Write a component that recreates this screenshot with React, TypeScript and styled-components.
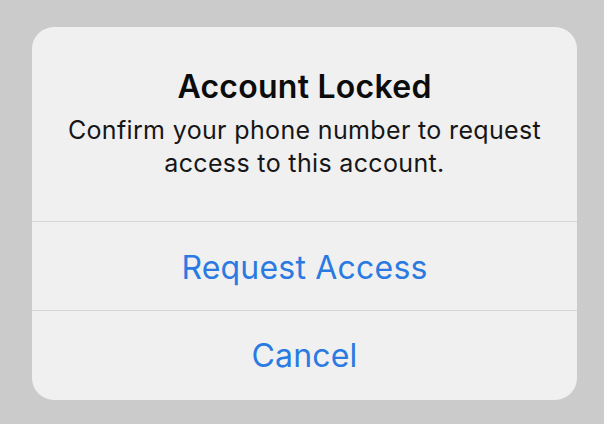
import React from "react";
import styled, { createGlobalStyle } from "styled-components";

const Global = createGlobalStyle`
  html, body {
    margin: 0;
    padding: 0;
    background: #cbcbcb;
  }
  body {
    width: 604px;
    height: 424px;
    overflow: hidden;
    font-family: Inter, "Noto Sans", "Liberation Sans", sans-serif;
  }
`;

const Stage = styled.div`
  width: 604px;
  height: 424px;
  box-sizing: border-box;
  padding: 27px 27px 24px 32px;
  display: flex;
  align-items: flex-start;
`;

const Dialog = styled.div`
  width: 545px;
  height: 373px;
  background: #f0f0f0;
  border-radius: 22px;
  display: flex;
  flex-direction: column;
  overflow: hidden;
`;

const Header = styled.div`
  box-sizing: border-box;
  height: 195px;
  padding: 41px 10px 0;
  display: flex;
  flex-direction: column;
  align-items: center;
  text-align: center;
  border-bottom: 1px solid #d6d6d6;
`;

const Title = styled.h1`
  margin: 0;
  font-size: 32px;
  line-height: 38px;
  letter-spacing: 0.25px;
  font-weight: 600;
  color: #0c0c0c;
`;

const Message = styled.p`
  margin: 8px 0 0;
  font-size: 25px;
  line-height: 33px;
  letter-spacing: 0.35px;
  font-weight: 400;
  color: #161616;
  white-space: nowrap;
`;

const Action = styled.button<{ $last?: boolean }>`
  box-sizing: border-box;
  height: ${(p) => (p.$last ? "89px" : "89px")};
  flex: none;
  border: none;
  background: transparent;
  font-family: inherit;
  font-size: 32px;
  letter-spacing: 0.2px;
  font-weight: 400;
  color: #2a7ae2;
  display: flex;
  align-items: center;
  justify-content: center;
  padding: ${(p) => (p.$last ? "0" : "3px 0 0")};
  border-bottom: ${(p) => (p.$last ? "none" : "1px solid #d6d6d6")};
`;

export default function App() {
  return (
    <>
      <Global />
      <Stage>
        <Dialog>
          <Header>
            <Title>Account Locked</Title>
            <Message>
              Confirm your phone number to request
              <br />
              access to this account.
            </Message>
          </Header>
          <Action>Request Access</Action>
          <Action $last>Cancel</Action>
        </Dialog>
      </Stage>
    </>
  );
}
